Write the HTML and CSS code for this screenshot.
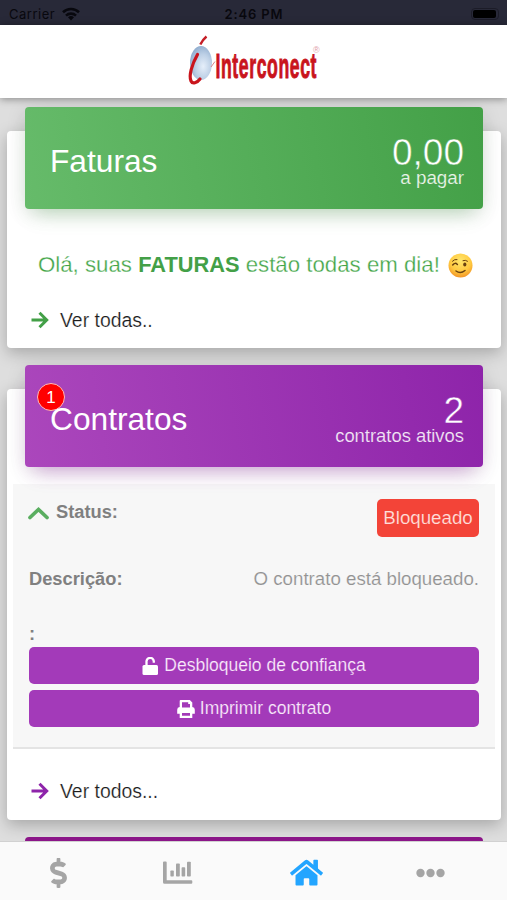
FILE: index.html
```html
<!DOCTYPE html>
<html lang="pt-BR">
<head>
<meta charset="utf-8">
<meta name="viewport" content="width=device-width, initial-scale=1">
<title>Interconect</title>
<link rel="stylesheet" href="styles.css">
</head>
<body>
<div class="statusbar">
  <div class="carrier"><span>Carrier</span>
    <svg width="18" height="14" viewBox="0 0 18 14"><g fill="none" stroke="#08080e" stroke-width="2.6"><path d="M1 5.2a11.6 11.6 0 0 1 16 0"/><path d="M4 8.6a7.3 7.3 0 0 1 10 0"/></g><path d="M6 10.3a4.4 4.4 0 0 1 6 0L9 13.5z" fill="#08080e"/></svg>
  </div>
  <span class="clock">2:46 PM</span>
  <div class="battery"><i></i></div>
</div>
<header class="topbar">
  <svg width="140" height="56" viewBox="0 0 140 56">
    <defs><radialGradient id="globe" cx=".6" cy=".6" r=".65"><stop offset="0" stop-color="#e6effa"/><stop offset=".55" stop-color="#bdd0e6"/><stop offset="1" stop-color="#8eabcd"/></radialGradient></defs>
    <ellipse cx="17" cy="29" rx="11" ry="17" fill="url(#globe)"/>
    <path d="M16.300 10.500C18 7 19.500 5 22.500 2.500" fill="none" stroke="#c51e26" stroke-width="2.400"/>
    <path d="M13.500 20.500C8 30 4.500 42 7 47c1.500 3.500 6 2 9-2" fill="none" stroke="#c9141c" stroke-width="3.200" stroke-linecap="round"/>
    <path d="M27 33l4-5.500" stroke="#d88389" stroke-width="1"/>
    <g transform="translate(31.500 43.500) scale(.49 1)"><text class="wordmark" x="0" y="0" textLength="206" lengthAdjust="spacing">Interconect</text></g>
    <text class="registered" x="129" y="19">®</text>
  </svg>
</header>
<main>
  <section class="card invoices">
    <div class="card-head green"><h2>Faturas</h2><div class="total"><strong>0,00</strong><span class="payable">a pagar</span></div></div>
    <p class="message"><span>Olá, suas <b>FATURAS</b> estão todas em dia!</span>
      <svg width="25" height="25" viewBox="0 0 25 25"><defs><radialGradient id="face" cy=".3" r=".75"><stop offset="0" stop-color="#ffe66c"/><stop offset=".6" stop-color="#ffc83f"/><stop offset="1" stop-color="#f08b22"/></radialGradient></defs><circle cx="12.500" cy="12.500" r="12" fill="url(#face)"/><g fill="none" stroke="#69400f" stroke-linecap="round"><path d="M4.500 8.200q2-2.300 4.500-1.700M15 7.600q2.500-1 4.500.6" stroke-width="1"/><path d="M4.700 12q2.300-3 4.700-.5" stroke-width="1.500"/><path d="M8 18q4.500 3.200 9-.5" stroke-width="1.500"/></g><ellipse cx="16.800" cy="11.500" rx="1.600" ry="2.100" fill="#69400f"/></svg>
    </p>
    <a class="more green-link"><svg width="18" height="18" viewBox="0 0 18 18"><path d="M0.500 9H15M8.500 1.800L15.700 9l-7.200 7.200"/></svg><span>Ver todas..</span></a>
  </section>
  <section class="card contracts">
    <div class="card-head purple"><em class="count">1</em><h2>Contratos</h2><div class="total"><strong>2</strong><span>contratos ativos</span></div></div>
    <div class="panel">
      <div class="row status"><svg width="22" height="15" viewBox="0 0 22 15"><path d="M2 12.500L10.500 4.500l8.500 8"/></svg><b>Status:</b><span class="blocked">Bloqueado</span></div>
      <div class="row description"><b>Descrição:</b><span>O contrato está bloqueado.</span></div>
      <div class="row blank"><b>:</b></div>
      <button><svg width="17" height="18" viewBox="0 0 17 18"><rect x=".5" y="8" width="15.500" height="10" rx="1.500" fill="#fff"/><path d="M4.500 8.500V5a3.600 3.600 0 0 1 7.300-.8v1.500" fill="none" stroke="#fff" stroke-width="2.300"/></svg><span>Desbloqueio de confiança</span></button>
      <button><svg width="18" height="18" viewBox="0 0 18 18"><path fill="#fff" fill-rule="evenodd" d="M3.300 0h9.500L15.300 2.500V7a2.700 2.700 0 0 1 2.500 2.700v4.100h-2.500V18H2.700v-4.200H.2V9.700A2.700 2.700 0 0 1 2.700 7V.8zM5 2.300V7.500h8V4h-1.800V2.300zM5 13v2.700h8V13z"/></svg><span>Imprimir contrato</span></button>
    </div>
    <a class="more purple-link"><svg width="18" height="18" viewBox="0 0 18 18"><path d="M0.500 9H15M8.500 1.800L15.700 9l-7.200 7.200"/></svg><span>Ver todos...</span></a>
  </section>
  <section class="next"></section>
</main>
<nav class="tabs">
  <a><svg width="17" height="30" viewBox="0 0 288 512"><path d="M209.200 233.400l-108-31.600C88.700 198.200 80 186.500 80 173.500c0-16.300 13.200-29.500 29.500-29.500h66.300c12.200 0 24.200 3.700 34.200 10.500 6.100 4.100 14.300 3.100 19.500-2l34.800-34c7.100-6.900 6.100-18.400-1.800-24.500C238 74.800 207.400 64.100 176 64V16c0-8.800-7.200-16-16-16h-32c-8.800 0-16 7.200-16 16v48h-2.500C45.800 64-5.400 118.700.5 183.600c4.200 46.100 39.400 83.600 83.800 96.600l102.500 30c12.500 3.700 21.200 15.300 21.200 28.300 0 16.300-13.200 29.500-29.500 29.500h-66.300C100 368 88 364.300 78 357.500c-6.100-4.100-14.300-3.100-19.500 2l-34.800 34c-7.100 6.900-6.100 18.400 1.800 24.500 24.500 19.200 55.100 29.900 86.500 30v48c0 8.800 7.200 16 16 16h32c8.800 0 16-7.200 16-16v-48.200c46.600-.9 90.300-28.600 105.700-72.700 21.500-61.600-14.600-124.800-72.500-141.700z"/></svg></a>
  <a><svg width="30" height="24" viewBox="0 0 30 24"><path d="M0 1.500a1 1 0 0 1 1-1h1.700a1 1 0 0 1 1 1v17.800h24.600a1 1 0 0 1 1 1v1.400a1 1 0 0 1-1 1H1.500A1.500 1.500 0 0 1 0 21.200z"/><rect x="7.400" y="9.500" width="3.400" height="6" rx=".7"/><rect x="13" y="2.500" width="3.800" height="13" rx=".8"/><rect x="18.600" y="6.200" width="3.600" height="9.300" rx=".8"/><rect x="24" y=".8" width="3.800" height="14.700" rx=".8"/></svg></a>
  <a class="active"><svg width="33" height="29.300" viewBox="0 0 576 512"><path d="M280.370 148.260L96 300.110V464a16 16 0 0 0 16 16l112.060-.29a16 16 0 0 0 15.920-16V368a16 16 0 0 1 16-16h64a16 16 0 0 1 16 16v95.640a16 16 0 0 0 16 16.050L464 480a16 16 0 0 0 16-16V300L295.670 148.260a12.190 12.190 0 0 0-15.300 0zM571.600 251.470L488 182.560V44.050a12 12 0 0 0-12-12h-56a12 12 0 0 0-12 12v72.610L318.470 43a48 48 0 0 0-61 0L4.340 251.470a12 12 0 0 0-1.600 16.900l25.500 31A12 12 0 0 0 45.150 301l235.220-193.740a12.190 12.190 0 0 1 15.300 0L530.900 301a12 12 0 0 0 16.900-1.600l25.500-31a12 12 0 0 0-1.700-16.930z"/></svg></a>
  <a><svg width="29" height="10" viewBox="0 0 29 10"><circle cx="4.500" cy="5" r="4.200"/><circle cx="14.500" cy="5" r="4.200"/><circle cx="24.500" cy="5" r="4.200"/></svg></a>
</nav>
</body>
</html>
```
FILE: styles.css
```css
* { box-sizing: border-box; }
body {
  margin: 0;
  height: 900px;
  overflow: hidden;
  display: flex;
  flex-direction: column;
  background: #dedede;
  font-family: "Liberation Sans", Arial, sans-serif;
}
svg { display: block; flex: none; }

.statusbar {
  height: 25px;
  flex: none;
  display: grid;
  grid-template-columns: 1fr auto 1fr;
  align-items: center;
  padding: 2px 8px 0 9px;
  background: #282938;
  color: #08080e;
  font: 13px/16px Inter, sans-serif;
}
.carrier { display: flex; align-items: center; gap: 7px; letter-spacing: .5px; }
.clock { font-weight: 600; letter-spacing: .85px; }
.battery {
  justify-self: end;
  width: 28px;
  height: 12px;
  padding: 1px;
  border: 1px solid #1c1c28;
  border-radius: 4px;
}
.battery i { display: block; width: 23px; height: 8px; background: #000; border-radius: 2px; }

.topbar {
  height: 73px;
  flex: none;
  display: flex;
  justify-content: center;
  align-items: center;
  padding-top: 1px;
  background: #fff;
  box-shadow: 0 1px 8px rgba(0, 0, 0, .4);
  z-index: 1;
}
.wordmark { font: bold 36px "Liberation Sans", sans-serif; fill: #c9141c; stroke: #c9141c; stroke-width: 1px; }
.registered { font: 9px "Liberation Sans", sans-serif; fill: #dfa0a8; }

main { flex: 1; min-height: 0; overflow: hidden; padding: 33px 6px 0 7px; }
.card {
  background: #fff;
  border-radius: 4px;
  padding: 0 6px;
  box-shadow: 0 5px 16px rgba(0, 0, 0, .25);
}
.invoices { height: 217px; margin-bottom: 41px; }
.contracts { height: 431px; margin-bottom: 17px; }
.card-head {
  position: relative;
  top: -24px;
  height: 102px;
  margin: 0 12px;
  padding: 0 19px 0 25px;
  display: flex;
  justify-content: space-between;
  align-items: center;
  border-radius: 4px;
  color: #fff;
}
.green { --tone: #48a44c; background: linear-gradient(80deg, #66bb6a, #43a047); box-shadow: 0 12px 20px -10px rgba(76, 175, 80, .35), 0 4px 20px rgba(0, 0, 0, .12); }
.purple { --tone: #9328ae; background: linear-gradient(80deg, #ab47bc, #8e24aa); box-shadow: 0 12px 20px -10px rgba(156, 39, 176, .4), 0 4px 20px rgba(0, 0, 0, .12); }
h2 { margin: 5px 0 0; font-size: 31.700px; line-height: 38px; font-weight: 400; position: relative; z-index: 1; }
.total { display: flex; flex-direction: column; align-items: flex-end; padding-top: 7px; }
.total strong { font-size: 37px; line-height: 34px; font-weight: 400; -webkit-text-stroke: .5px var(--tone); }
.total span { font-size: 18.400px; line-height: 20px; margin-top: -2px; color: rgba(255, 255, 255, .9); -webkit-text-stroke: .15px var(--tone); }
.total .payable { font-size: 18.800px; }
.count {
  position: absolute;
  left: 12px;
  top: 18px;
  width: 28px;
  height: 28px;
  border: 1px solid #fbb;
  border-radius: 50%;
  background: #f00;
  font: 17px/27px "Liberation Sans", sans-serif;
  text-align: center;
}
.message {
  margin: 17px 0 0;
  padding-left: 25px;
  height: 30px;
  display: flex;
  align-items: center;
  gap: 8px;
  color: #43a548;
  font-size: 22.250px;
  white-space: nowrap;
  -webkit-text-stroke: .3px #fff;
}
.message b { color: #43a047; font-size: 21.800px; -webkit-text-stroke: 0; }
.more { display: flex; align-items: center; gap: 11px; padding-left: 18px; height: 30px; font-size: 19.400px; color: #1c1c1c; }
.more svg { fill: none; stroke-width: 3; }
.more span { stroke: none; margin-top: 1px; -webkit-text-stroke: .2px #fff; }
.invoices .more { margin-top: 25px; }
.contracts .more { margin-top: 27px; }
.green-link { stroke: #43a047; }
.purple-link { stroke: #8e24aa; }

.panel { height: 265px; margin-top: -7px; padding: 15px 16px 0; background: #f7f7f7; border-bottom: 2px solid #e4e4e4; color: #808080; }
.row { display: flex; align-items: flex-start; font-size: 18.300px; line-height: 24px; }
.row b { font-weight: 700; }
.status { height: 68px; gap: 5px; }
.status b { margin-top: 1px; }
.status svg { margin: 6px 1px 0 -1px; fill: none; stroke: #5aae60; stroke-width: 3.700; stroke-linecap: round; }
.blocked { margin-left: auto; width: 102px; height: 38px; border-radius: 5px; background: #f34438; color: #ffdeda; font-size: 18.700px; line-height: 37px; text-align: center; -webkit-text-stroke: .15px #f34438; }
.description { height: 55px; justify-content: space-between; }
.description span { font-size: 18.700px; color: #929292; -webkit-text-stroke: .15px #f7f7f7; }
.blank { height: 25px; }
button {
  width: 100%;
  height: 37px;
  margin: 0 0 6px;
  padding: 0;
  display: flex;
  justify-content: center;
  align-items: center;
  gap: 5px;
  border: 0;
  border-radius: 5px;
  background: #a33ab9;
  color: #f9e8fb;
  font: 17.500px/24px "Liberation Sans", sans-serif;
  -webkit-text-stroke: .15px #a33ab9;
}
button span { margin-top: -2px; }

.next { height: 102px; margin: 0 18px; border-radius: 4px; background: #8b1588; }
.tabs {
  height: 59px;
  flex: none;
  display: grid;
  grid-template-columns: 116px 124px 132px 116px;
  align-items: center;
  padding-top: 4px;
  border-top: 1px solid #d1d1d1;
  background: #fafafa;
  fill: #a5a5a5;
  z-index: 1;
}
.tabs a { display: flex; justify-content: center; }
.tabs .active { fill: #23a5ff; }
```
